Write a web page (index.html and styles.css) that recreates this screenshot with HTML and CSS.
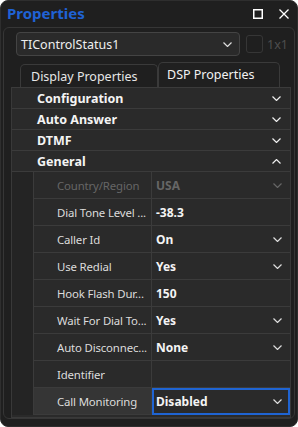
FILE: index.html
```html
<!DOCTYPE html>
<html lang="en">
<head>
    <meta charset="UTF-8">
    <meta name="viewport" content="width=device-width, initial-scale=1.0">
    <title>Properties</title>
    <link rel="stylesheet" href="styles.css">
</head>
<body>
    <div class="window">
        <div class="titlebar">
            <span class="title">Properties</span>
            <div class="win-buttons">
                <svg width="10" height="10" viewBox="0 0 10 10"><rect x="0.75" y="0.75" width="8.5" height="8.5" fill="none" stroke="#fff" stroke-width="1.5"/></svg>
                <svg width="10" height="10" viewBox="0 0 10 10"><path d="M0.5 0.5 L9.5 9.5 M9.5 0.5 L0.5 9.5" stroke="#fff" stroke-width="1.3"/></svg>
            </div>
        </div>

        <div class="panel">
            <div class="selector">
                <div class="combo">
                    <span>TIControlStatus1</span>
                    <svg class="chev" width="9" height="5" viewBox="0 0 9 5"><path d="M0.5 0.5 L4.5 4.5 L8.5 0.5" fill="none" stroke="#ddd" stroke-width="1.2"/></svg>
                </div>
                <span class="check"></span>
                <span class="check-label">1x1</span>
            </div>

            <div class="tabs">
                <div class="tab">Display Properties</div>
                <div class="tab active">DSP Properties</div>
            </div>

            <div class="grid">
                <div class="category">
                    <span>Configuration</span>
                    <svg class="chev" width="9" height="5" viewBox="0 0 9 5"><path d="M0.5 0.5 L4.5 4.5 L8.5 0.5" fill="none" stroke="#eee" stroke-width="1.2"/></svg>
                </div>
                <div class="category">
                    <span>Auto Answer</span>
                    <svg class="chev" width="9" height="5" viewBox="0 0 9 5"><path d="M0.5 0.5 L4.5 4.5 L8.5 0.5" fill="none" stroke="#eee" stroke-width="1.2"/></svg>
                </div>
                <div class="category">
                    <span>DTMF</span>
                    <svg class="chev" width="9" height="5" viewBox="0 0 9 5"><path d="M0.5 0.5 L4.5 4.5 L8.5 0.5" fill="none" stroke="#eee" stroke-width="1.2"/></svg>
                </div>
                <div class="category">
                    <span>General</span>
                    <svg class="chev" width="9" height="5" viewBox="0 0 9 5"><path d="M0.5 4.5 L4.5 0.5 L8.5 4.5" fill="none" stroke="#eee" stroke-width="1.2"/></svg>
                </div>

                <div class="props">
                    <div class="prop disabled">
                        <span class="name">Country/Region</span>
                        <span class="value">USA <svg class="chev" width="9" height="5" viewBox="0 0 9 5"><path d="M0.5 0.5 L4.5 4.5 L8.5 0.5" fill="none" stroke="#666" stroke-width="1.2"/></svg></span>
                    </div>
                    <div class="prop">
                        <span class="name">Dial Tone Level ...</span>
                        <span class="value">-38.3</span>
                    </div>
                    <div class="prop">
                        <span class="name">Caller Id</span>
                        <span class="value">On <svg class="chev" width="9" height="5" viewBox="0 0 9 5"><path d="M0.5 0.5 L4.5 4.5 L8.5 0.5" fill="none" stroke="#ddd" stroke-width="1.2"/></svg></span>
                    </div>
                    <div class="prop">
                        <span class="name">Use Redial</span>
                        <span class="value">Yes <svg class="chev" width="9" height="5" viewBox="0 0 9 5"><path d="M0.5 0.5 L4.5 4.5 L8.5 0.5" fill="none" stroke="#ddd" stroke-width="1.2"/></svg></span>
                    </div>
                    <div class="prop">
                        <span class="name">Hook Flash Dur...</span>
                        <span class="value">150</span>
                    </div>
                    <div class="prop">
                        <span class="name">Wait For Dial To...</span>
                        <span class="value">Yes <svg class="chev" width="9" height="5" viewBox="0 0 9 5"><path d="M0.5 0.5 L4.5 4.5 L8.5 0.5" fill="none" stroke="#ddd" stroke-width="1.2"/></svg></span>
                    </div>
                    <div class="prop">
                        <span class="name">Auto Disconnec...</span>
                        <span class="value">None <svg class="chev" width="9" height="5" viewBox="0 0 9 5"><path d="M0.5 0.5 L4.5 4.5 L8.5 0.5" fill="none" stroke="#ddd" stroke-width="1.2"/></svg></span>
                    </div>
                    <div class="prop">
                        <span class="name">Identifier</span>
                        <span class="value"></span>
                    </div>
                    <div class="prop selected">
                        <span class="name">Call Monitoring</span>
                        <span class="value">Disabled <svg class="chev" width="9" height="5" viewBox="0 0 9 5"><path d="M0.5 0.5 L4.5 4.5 L8.5 0.5" fill="none" stroke="#ddd" stroke-width="1.2"/></svg></span>
                    </div>
                </div>
            </div>
        </div>
    </div>
</body>
</html>
```

FILE: styles.css
```css
body {
    margin: 0;
    background-color: white;
    font-family: 'Noto Sans', 'DejaVu Sans', sans-serif;
    font-size: 12px;
    color: #e6e6e6;
}
.window {
    width: 296px;
    height: 425px;
    background-color: #1f1f1f;
    border: 1px solid #2e2e2e;
    border-radius: 8px;
    overflow: hidden;
}
.titlebar {
    height: 26px;
    display: flex;
    align-items: center;
    justify-content: space-between;
    padding: 0 8px 0 6px;
}
.title {
    color: #1f62d4;
    font-size: 15px;
    font-weight: bold;
    margin-top: -2px;
}
.win-buttons {
    display: flex;
    gap: 16px;
    margin-top: -1px;
}
.panel {
    margin: 0 2px;
    height: 390px;
    border: 1px solid #363636;
    border-radius: 6px;
}
.selector {
    display: flex;
    align-items: center;
    margin: 4px 0 0 12px;
    height: 24px;
}
.combo {
    width: 224px;
    height: 24px;
    box-sizing: border-box;
    background-color: #2a2a2a;
    border: 1px solid #444;
    border-radius: 4px;
    display: flex;
    align-items: center;
    justify-content: space-between;
    padding: 0 7px 0 4px;
    font-size: 12.5px;
    color: #eee;
}
.check {
    width: 15px;
    height: 16px;
    margin-left: 6px;
    border: 1px solid #363636;
    border-radius: 3px;
}
.check-label {
    margin-left: 4px;
    color: #4e4e4e;
    font-size: 12.5px;
}
.tabs {
    display: flex;
    align-items: flex-end;
    margin: 6px 0 0 16px;
    height: 25px;
}
.tab {
    height: 23px;
    width: 138px;
    box-sizing: border-box;
    border: 1px solid #3a3a3a;
    border-bottom: none;
    border-radius: 5px 5px 0 0;
    padding: 3px 0 0 10px;
    font-size: 12.5px;
    color: #e6e6e6;
}
.tab.active {
    height: 25px;
    width: 122px;
    padding-left: 8px;
    background-color: #202020;
    color: #f2f2f2;
}
.grid {
    margin-left: 7px;
    width: 280px;
    height: 331px;
    box-sizing: border-box;
    border: 1px solid #393939;
    border-top: none;
    background-color: #2a2a2a;
}
.category {
    height: 20px;
    border-top: 1px solid #3b3b3b;
    display: flex;
    align-items: center;
    justify-content: space-between;
    padding: 0 9px 0 25px;
    font-weight: bold;
    font-size: 12.5px;
    color: #f4f4f4;
}
.props {
    padding-left: 21px;
    background-color: #242424;
    border-top: 1px solid #3b3b3b;
}
.prop {
    display: grid;
    grid-template-columns: 119px 1fr;
    height: 27px;
    background-color: #2a2a2a;
}
.name, .value {
    display: flex;
    align-items: center;
    border-bottom: 1px solid #3b3b3b;
}
.name {
    border-left: 1px solid #3b3b3b;
    border-right: 1px solid #3b3b3b;
    padding-left: 23px;
    font-size: 11.4px;
    letter-spacing: -0.15px;
    color: #dcdcdc;
    white-space: nowrap;
}
.value {
    justify-content: space-between;
    padding: 0 8px 0 4px;
    font-weight: bold;
    color: #f4f4f4;
}
.prop.disabled .name, .prop.disabled .value {
    color: #666;
}
.prop.selected .name {
    background-color: #353535;
}
.prop.selected .value {
    border: 2px solid #1f64d2;
    padding: 0 6px 0 2px;
}
```
